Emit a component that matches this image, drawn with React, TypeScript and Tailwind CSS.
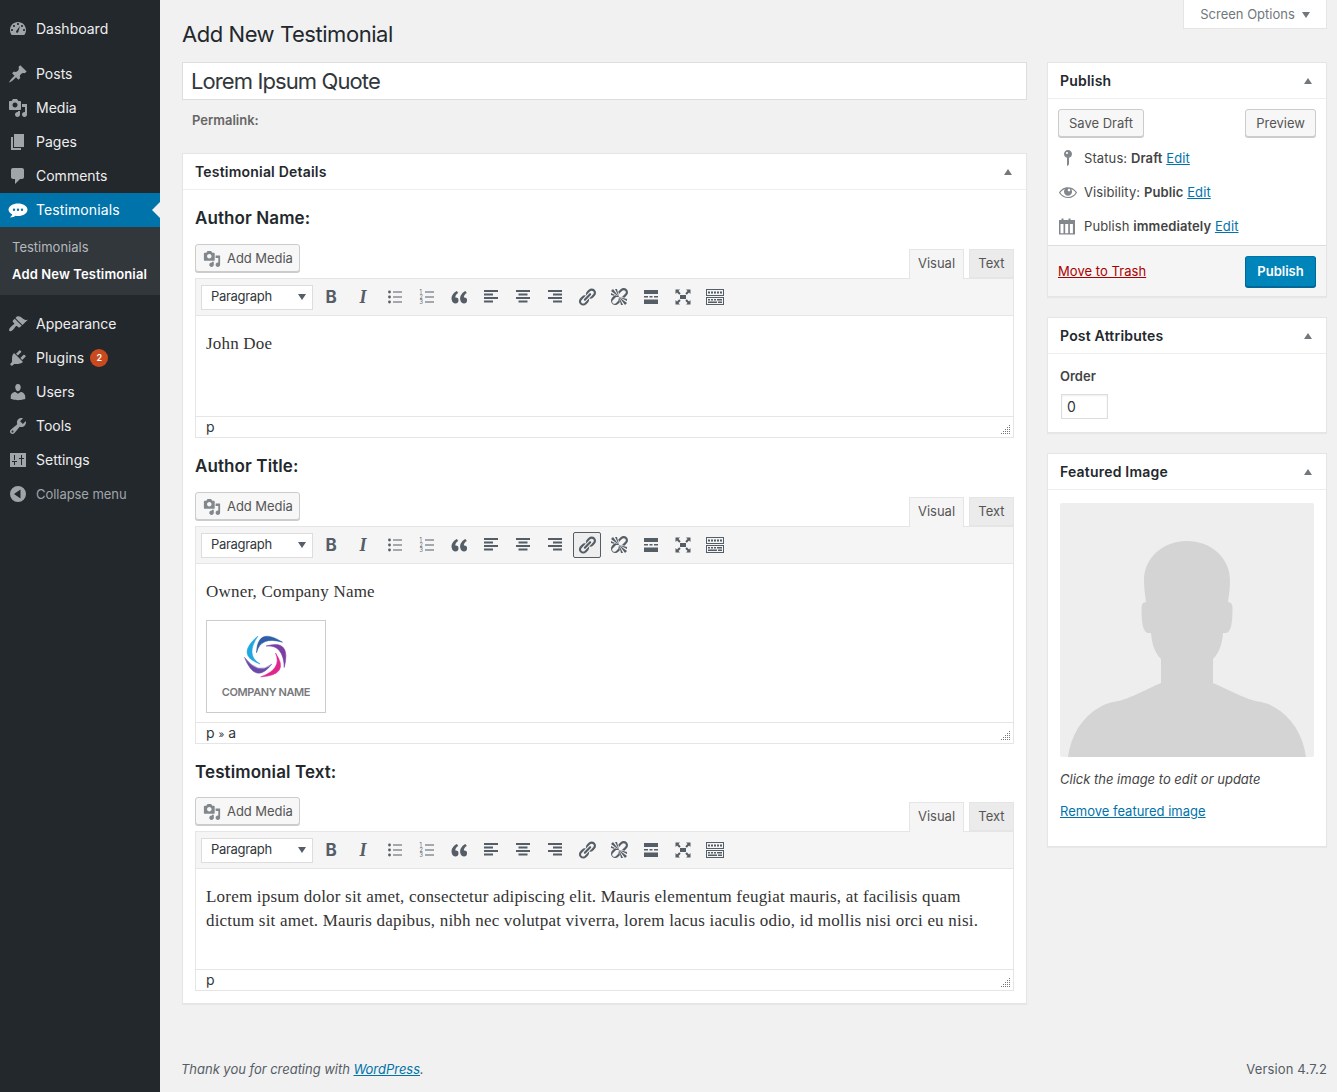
import type { ReactNode } from "react";

const PATHS = {
  dashboard:
    "M3.76 16h12.48c1.1-1.37 1.76-3.11 1.76-5 0-4.42-3.58-8-8-8s-8 3.58-8 8c0 1.89.66 3.63 1.76 5zM10 4c.55 0 1 .45 1 1s-.45 1-1 1-1-.45-1-1 .45-1 1-1zM6 6c.55 0 1 .45 1 1s-.45 1-1 1-1-.45-1-1 .45-1 1-1zm8 0c.55 0 1 .45 1 1s-.45 1-1 1-1-.45-1-1 .45-1 1-1zm-5.37 5.55L12 7l-1.55 5.55c-.1.9-.9 1.45-1.6 1.3-.9-.2-1.2-1.3-.22-2.3zM4 10c.55 0 1 .45 1 1s-.45 1-1 1-1-.45-1-1 .45-1 1-1zm12 0c.55 0 1 .45 1 1s-.45 1-1 1-1-.45-1-1 .45-1 1-1z",
  post: "M10.44 3.02l1.82-1.82 6.36 6.35-1.83 1.82c-1.05-.68-2.48-.57-3.41.36l-.75.75c-.92.93-1.04 2.35-.35 3.41l-1.83 1.82-2.41-2.41-2.8 2.79c-.42.42-3.38 2.71-3.8 2.29s1.86-3.39 2.28-3.81l2.79-2.79L4.1 9.36l1.83-1.82c1.05.69 2.48.57 3.4-.36l.75-.75c.93-.92 1.05-2.35.36-3.41z",
  media:
    "M13 11V4c0-.55-.45-1-1-1h-1.67L9 1H5L3.67 3H2c-.55 0-1 .45-1 1v7c0 .55.45 1 1 1h10c.55 0 1-.45 1-1zM7 4.5c1.38 0 2.5 1.12 2.5 2.5S8.38 9.5 7 9.5 4.5 8.38 4.5 7 5.62 4.5 7 4.5zM14 6h5v10.5c0 1.38-1.12 2.5-2.5 2.5S14 17.88 14 16.5s1.12-2.5 2.5-2.5c.17 0 .34.02.5.05V9h-3V6zm-4 8.05V13h2v3.5c0 1.38-1.12 2.5-2.5 2.5S7 17.88 7 16.5 8.12 14 9.5 14c.17 0 .34.02.5.05z",
  page: "M6 15V2h10v13H6zm-1 1h8v2H3V5h2v11z",
  comments:
    "M5 2h9c1.1 0 2 .9 2 2v7c0 1.1-.9 2-2 2h-2l-5 5v-5H5c-1.1 0-2-.9-2-2V4c0-1.1.9-2 2-2z",
  bubble:
    "M10 3.5c5 0 9.5 2.6 9.5 6.2 0 3.7-4.5 6.3-9.5 6.3-.9 0-1.7-.1-2.5-.2-1.2 1-3.2 1.7-5.6 1.7 1.1-.8 2-1.9 2.3-3.2C2 13.2.5 11.600.5 9.700.5 6.100 5 3.500 10 3.500zM6 8.500a1.200 1.200 0 100 2.400 1.200 1.200 0 000-2.400zm4 0a1.200 1.200 0 100 2.400 1.200 1.200 0 000-2.400zm4 0a1.200 1.200 0 100 2.400 1.200 1.200 0 000-2.400z",
  appearance:
    "M14.48 11.06L7.41 3.99l1.5-1.5c.5-.56 2.3-.47 3.51.32 1.21.8 1.43 1.28 2.91 2.1 1.18.64 2.45 1.26 4.45.85zm-.71.71L6.7 4.7 4.93 6.47c-.39.39-.39 1.02 0 1.41l1.06 1.06c.39.39.39 1.03 0 1.42-.6.6-1.43 1.11-2.21 1.69-.35.26-.7.53-1.01.84-1.43 1.43-2.3 3.07-1.43 3.93s2.5 0 3.93-1.43c.31-.31.58-.66.84-1.01.58-.78 1.09-1.61 1.69-2.21.39-.39 1.03-.39 1.42 0l1.06 1.06c.39.39 1.02.39 1.41 0z",
  plugins:
    "M13.11 4.36L9.87 7.6 8 5.73l3.24-3.24c.35-.34 1.05-.2 1.56.32.52.51.66 1.21.31 1.55zm-8 1.77l.91-1.12 9.01 9.01-1.19.84c-.71.71-2.63 1.16-3.82 1.16H6.14L4.9 17.26c-.59.59-1.54.59-2.12 0-.59-.58-.59-1.53 0-2.12l1.24-1.24v-3.88c0-1.13.4-3.19 1.09-3.89zm7.26 3.97l3.24-3.24c.34-.35 1.04-.21 1.55.31.52.51.66 1.21.31 1.55l-3.24 3.25z",
  users:
    "M10 9.25c-2.27 0-2.73-3.44-2.73-3.44C7 4.02 7.82 2 9.97 2c2.16 0 2.98 2.02 2.71 3.81 0 0-.41 3.44-2.68 3.44zm0 2.57L12.72 10c2.39 0 4.52 2.33 4.52 4.53v2.49s-3.65 1.13-7.24 1.13c-3.65 0-7.24-1.13-7.24-1.13v-2.49c0-2.25 1.94-4.48 4.47-4.48z",
  tools:
    "M16.68 9.77c-1.34 1.34-3.3 1.67-4.95.99l-5.41 6.52c-.99.99-2.59.99-3.58 0s-.99-2.59 0-3.57l6.52-5.42c-.68-1.65-.35-3.61.99-4.95 1.28-1.28 3.12-1.62 4.72-1.06l-2.89 2.89 2.82 2.82 2.86-2.87c.53 1.58.18 3.39-1.08 4.65zM3.81 16.21c.4.39 1.04.39 1.43 0 .4-.4.4-1.04 0-1.43-.39-.4-1.03-.4-1.43 0-.39.39-.39 1.03 0 1.43z",
  settings:
    "M2 3h16v14H2zM6 5v5h1V5zM4 11v1h2v3h1v-3h2v-1zM13 5v3h-2v1h2v6h1V9h2V8h-2V5z",
  collapse: "M10 2a8 8 0 100 16 8 8 0 000-16zM12.500 5.500v9L6 10z",
  pin: "M14 6c0 1.860-1.280 3.410-3 3.860V16c0 1-2 2-2 2V9.860c-1.720-.450-3-2-3-3.860 0-2.210 1.790-4 4-4s4 1.790 4 4zM8 5c0 .550.450 1 1 1s1-.450 1-1-.450-1-1-1-1 .450-1 1z",
  eye: "M18.300 9.500C15 4.900 8.500 3.800 3.900 7.200c-1.200.900-2.200 2.100-3 3.400.200.400.500.800.800 1.200 3.300 4.600 9.600 5.600 14.200 2.400.900-.700 1.700-1.400 2.400-2.400.300-.400.500-.800.800-1.200-.300-.400-.500-.800-.800-1.100zm-8.200-2.300c.500-.500 1.300-.500 1.800 0s.500 1.300 0 1.800-1.300.500-1.800 0-.500-1.300 0-1.800zm-.100 7.700c-3.100 0-6-1.600-7.700-4.200C3.500 9 5.100 7.800 7 7c-.700.800-1 1.700-1 2.700 0 2.200 1.700 4.100 4 4.100 2.200 0 4.100-1.700 4.100-4 0-1-.400-2-1-2.700 1.900.800 3.500 2 4.600 3.700-1.700 2.600-4.600 4.200-7.700 4.200z",
  calendar:
    "M1 4h2.500V2.500h2V4h5V2.500h2V4H17v14.500H1zM2.500 8v9.300h3V8zm4.700 0v9.300h3V8zm4.700 0v9.300h3V8z",
  quote:
    "M9.490 13.220c0-.740-.200-1.380-.610-1.900-.620-.780-1.830-.880-2.530-.720-.290-1.650 1.110-3.750 2.920-4.650L7.880 4c-2.570 1.110-5.840 4.400-5.260 8.500.370 2.560 2.040 4 3.900 4 1.660 0 2.970-1.170 2.970-3.280zm8.560 0c0-.740-.200-1.380-.610-1.900-.620-.780-1.830-.880-2.530-.720-.290-1.650 1.110-3.750 2.920-4.650L16.440 4c-2.570 1.110-5.840 4.400-5.260 8.500.370 2.560 2.040 4 3.900 4 1.660 0 2.970-1.170 2.970-3.280z",
  link: "M17.740 2.760c1.680 1.690 1.680 4.410 0 6.100l-1.530 1.520c-1.120 1.120-2.700 1.490-4.140 1.120l2.620-2.610.760-.770.760-.760c.840-.840.840-2.200 0-3.040-.840-.850-2.200-.850-3.040 0l-.770.760-3.380 3.380c-.370-1.440 0-3.020 1.120-4.140l1.520-1.530c1.690-1.680 4.420-1.680 6.100 0zM8.590 13.430l5.340-5.340c.420-.420.420-1.100 0-1.520-.440-.430-1.130-.390-1.530 0l-5.330 5.340c-.420.420-.420 1.100 0 1.520.440.430 1.130.390 1.520 0zm-.760 2.290l4.140-4.150c.380 1.440 0 3.020-1.140 4.160l-1.520 1.520c-1.680 1.680-4.410 1.680-6.100 0-1.680-1.680-1.680-4.420 0-6.100l1.530-1.520c1.120-1.120 2.700-1.500 4.140-1.140L4.690 12.900c-.840.840-.840 2.200 0 3.040.840.850 2.200.850 3.040 0z",
  unlink:
    "M17.740 2.260c1.680 1.690 1.680 4.410 0 6.100l-1.530 1.520c-.320.330-.690.580-1.080.770L13 10l1.690-1.640.760-.770.760-.760c.840-.840.840-2.200 0-3.040-.840-.850-2.200-.850-3.040 0l-.770.760-.760.760L10 7l-.650-2.140c.190-.380.440-.750.770-1.070l1.520-1.530c1.690-1.680 4.420-1.680 6.100 0zM2 4l8 6-6-8zm4-2l4 8-2-8H6zM2 6l8 4-8-2V6zm7.360 7.690L10 10l.860 5.140-1.520 1.530c-1.680 1.680-4.410 1.680-6.100 0-1.680-1.680-1.680-4.420 0-6.100l1.530-1.520c.320-.330.690-.580 1.080-.770L7 10l-1.690 1.640-.760.770-.760.760c-.840.840-.840 2.200 0 3.040.840.850 2.200.850 3.040 0l.770-.760.760-.760zM18 16l-8-6 6 8zm-4 2l-4-8 2 8h2zm4-4l-8-4 8 2v2z",
  more: "M3 3h14v4H3zM3 9h4v1.500H3zM8.500 9h3v1.500h-3zM13 9h4v1.500h-4zM3 12.500h14V17H3z",
  fullscreen:
    "M7 8h6v4H7zM2.500 2.500H7L5.500 4l2.200 2.200-1.500 1.500L4 5.500 2.500 7zM17.500 2.500V7L16 5.500l-2.200 2.200-1.500-1.500L14.500 4 13 2.500zM2.500 17.500V13L4 14.500l2.200-2.200 1.500 1.500L5.500 16 7 17.500zM17.500 17.500H13l1.500-1.500-2.200-2.200 1.500-1.500 2.200 2.200L17.500 13z",
  kitchen:
    "M1 2h18v7H1zM2 3v5h16V3zM3 4.500h2v2H3zM6 4.500h2v2H6zM9 4.500h2v2H9zM12 4.500h2v2h-2zM15 4.500h2v2h-2zM1 10h18v8H1zM2 11v6h16v-6zM3 12h2v1.500H3zM6 12h2v1.500H6zM9 12h2v1.500H9zM12 12h5v1.500h-5zM3 14.500h9V16H3zM13 14.500h4V16h-4z",
};

function Dash({ d, className }: { d: string; className?: string }) {
  return (
    <svg viewBox="0 0 20 20" className={className} fill="currentColor">
      <path d={d} fillRule="evenodd" clipRule="evenodd" />
    </svg>
  );
}

function MenuItem({ icon, label, children }: { icon: string; label: string; children?: ReactNode }) {
  return (
    <div className="flex h-[34px] items-center text-[14px] text-[#eeeeee]">
      <Dash d={icon} className="ml-[8px] h-[20px] w-[20px] text-[#a0a5aa]" />
      <span className="ml-[8px] pb-[2px]">{label}</span>
      {children}
    </div>
  );
}

function Sidebar() {
  return (
    <aside className="w-[160px] shrink-0 bg-[#23282d] pt-[12px]">
      <MenuItem icon={PATHS.dashboard} label="Dashboard" />
      <div className="h-[11px]" />
      <MenuItem icon={PATHS.post} label="Posts" />
      <MenuItem icon={PATHS.media} label="Media" />
      <MenuItem icon={PATHS.page} label="Pages" />
      <MenuItem icon={PATHS.comments} label="Comments" />
      <div className="relative flex h-[34px] items-center bg-[#0073aa] text-[14px] text-white">
        <Dash d={PATHS.bubble} className="ml-[8px] h-[20px] w-[20px]" />
        <span className="ml-[8px] pb-[2px] tracking-[0.1px]">Testimonials</span>
        <span className="absolute right-0 top-[9px] h-0 w-0 border-y-[8px] border-r-[8px] border-y-transparent border-r-[#f1f1f1]" />
      </div>
      <div className="h-[68px] bg-[#32373c] pt-[8px] text-[13px]">
        <div className="flex h-[26px] items-center pl-[12px] text-[#b4b9be]">Testimonials</div>
        <div className="flex h-[28px] items-center pl-[12px] font-semibold tracking-[0.13px] text-white">Add New Testimonial</div>
      </div>
      <div className="h-[12px]" />
      <MenuItem icon={PATHS.appearance} label="Appearance" />
      <MenuItem icon={PATHS.plugins} label="Plugins">
        <span className="ml-[6px] flex h-[18px] w-[18px] items-center justify-center rounded-full bg-[#ca4a1f] text-[9px] font-semibold text-white">
          2
        </span>
      </MenuItem>
      <MenuItem icon={PATHS.users} label="Users" />
      <MenuItem icon={PATHS.tools} label="Tools" />
      <MenuItem icon={PATHS.settings} label="Settings" />
      <div className="flex h-[34px] items-center text-[13px] text-[#a0a5aa]">
        <Dash d={PATHS.collapse} className="ml-[8px] h-[20px] w-[20px]" />
        <span className="ml-[8px] pt-[2px] tracking-[-0.05px]">Collapse menu</span>
      </div>
    </aside>
  );
}

function Caret() {
  return <span className="h-0 w-0 border-x-[4px] border-b-[6px] border-x-transparent border-b-[#72777c]" />;
}

function Box({ title, children }: { title: string; children: ReactNode }) {
  return (
    <section className="border border-[#e5e5e5] bg-white shadow-[0_1px_1px_rgba(0,0,0,0.04)]">
      <header className="flex h-[36px] items-center justify-between border-b border-[#eeeeee] pl-[12px] pr-[14px] text-[14px] font-semibold tracking-[0.2px] text-[#23282d]">
        <span>{title}</span>
        <Caret />
      </header>
      {children}
    </section>
  );
}

function WpButton({ children, className = "" }: { children: ReactNode; className?: string }) {
  return (
    <button className={`flex h-[28px] items-center rounded-[3px] border border-[#cccccc] bg-[#f7f7f7] px-[10px] pt-[1px] text-[13px] text-[#555555] shadow-[0_1px_0_#cccccc] ${className}`}>
      {children}
    </button>
  );
}

function Bars({ rows }: { rows: [number, number][] }) {
  return (
    <svg viewBox="0 0 20 20" className="h-[20px] w-[20px]" fill="currentColor">
      {rows.map(([x, w], i) => (
        <rect key={i} x={x} y={3 + i * 3.5} width={w} height={2} />
      ))}
    </svg>
  );
}

function BulletList() {
  return (
    <svg viewBox="0 0 20 20" className="h-[20px] w-[20px]" fill="currentColor">
      {[5, 10, 15].map((y) => (
        <g key={y}>
          <circle cx={4.5} cy={y} r={1.4} />
          <rect x={8} y={y - 0.5} width={9} height={1} />
        </g>
      ))}
    </svg>
  );
}

function NumberList() {
  return (
    <svg viewBox="0 0 20 20" className="h-[20px] w-[20px]" fill="currentColor">
      {[1, 2, 3].map((n) => (
        <g key={n}>
          <text x={2.500} y={2 + n * 5} fontSize={5.500} fontFamily="Inter, sans-serif">
            {n}
          </text>
          <rect x={8} y={n * 5 - 0.5} width={9} height={1} />
        </g>
      ))}
    </svg>
  );
}

function Tool({ children, active }: { children: ReactNode; active?: boolean }) {
  return (
    <div
      className={`flex h-[26px] w-[28px] items-center justify-center rounded-[2px] border text-[#555d66] ${
        active ? "border-[#555d66] bg-[#eeeeee]" : "border-transparent"
      }`}
    >
      {children}
    </div>
  );
}

function Toolbar({ activeLink }: { activeLink?: boolean }) {
  return (
    <div className="flex h-[37px] items-center border-b border-[#e5e5e5] bg-[#f5f5f5] pl-[5px]">
      <div className="flex h-[25px] w-[112px] items-center justify-between border border-[#dddddd] bg-white pl-[9px] pr-[6px] text-[13px] text-[#32373c]">
        <span className="tracking-[-0.3px]">Paragraph</span>
        <span className="h-0 w-0 border-x-[4px] border-t-[6px] border-x-transparent border-t-[#555d66]" />
      </div>
      <div className="ml-[4px] flex gap-[4px]">
        <Tool>
          <span className="pt-[2px] text-[17px] font-bold text-[#555d66]">B</span>
        </Tool>
        <Tool>
          <span className="pt-[1px] text-[18px] font-bold italic text-[#555d66] [font-family:'Liberation_Serif',serif]">I</span>
        </Tool>
        <Tool><BulletList /></Tool>
        <Tool><NumberList /></Tool>
        <Tool><Dash d={PATHS.quote} className="h-[20px] w-[20px]" /></Tool>
        <Tool><Bars rows={[[3, 14], [3, 9], [3, 14], [3, 9]]} /></Tool>
        <Tool><Bars rows={[[3, 14], [5.500, 9], [3, 14], [5.500, 9]]} /></Tool>
        <Tool><Bars rows={[[3, 14], [8, 9], [3, 14], [8, 9]]} /></Tool>
        <Tool active={activeLink}><Dash d={PATHS.link} className="h-[20px] w-[20px]" /></Tool>
        <Tool><Dash d={PATHS.unlink} className="h-[20px] w-[20px]" /></Tool>
        <Tool><Dash d={PATHS.more} className="h-[20px] w-[20px]" /></Tool>
        <Tool><Dash d={PATHS.fullscreen} className="h-[20px] w-[20px]" /></Tool>
        <Tool><Dash d={PATHS.kitchen} className="h-[20px] w-[20px]" /></Tool>
      </div>
    </div>
  );
}

function ResizeGrip() {
  return (
    <svg viewBox="0 0 10 10" className="h-[10px] w-[10px] text-[#72777c]" fill="currentColor">
      {[
        [8, 0], [6, 2], [8, 2], [4, 4], [6, 4], [8, 4], [2, 6], [4, 6], [6, 6], [8, 6], [0, 8], [2, 8], [4, 8], [6, 8], [8, 8],
      ].map(([x, y]) => (
        <rect key={`${x}-${y}`} x={x} y={y} width={1} height={1} />
      ))}
    </svg>
  );
}

function Editor({
  title,
  headerClass,
  contentClass,
  path,
  activeLink,
  children,
}: {
  title: string;
  headerClass: string;
  contentClass: string;
  path: ReactNode;
  activeLink?: boolean;
  children: ReactNode;
}) {
  return (
    <div>
      <h3 className={`pt-[16px] text-[17px] font-semibold leading-[24px] tracking-[0.1px] text-[#23282d] ${headerClass}`}>{title}</h3>
      <div className="relative z-10 flex h-[34px] items-start justify-between">
        <WpButton className="w-[105px] pl-[7px] pr-0">
          <Dash d={PATHS.media} className="h-[18px] w-[18px] text-[#82878c]" />
          <span className="ml-[6px] whitespace-nowrap tracking-[-0.05px]">Add Media</span>
        </WpButton>
        <div className="mt-[5px] flex text-[13px]">
          <div className="flex h-[30px] w-[55px] items-center justify-center border border-b-0 border-[#e5e5e5] bg-[#f5f5f5] pb-[2px] text-[#555555]">
            Visual
          </div>
          <div className="ml-[5px] flex h-[29px] w-[45px] items-center justify-center border border-[#e5e5e5] bg-[#ebebeb] text-[#555555]">
            Text
          </div>
        </div>
      </div>
      <div className="border border-[#e5e5e5] bg-white">
        <Toolbar activeLink={activeLink} />
        <div className={`pl-[10px] pr-[20px] pt-[16px] text-[17px] leading-[24px] tracking-[0.2px] text-[#333333] [font-family:'Liberation_Serif',serif] ${contentClass}`}>
          {children}
        </div>
        <div className="relative flex h-[21px] items-center border-t border-[#e5e5e5] pb-[2px] pl-[10px] text-[14px] text-[#32373c]">
          {path}
          <span className="absolute bottom-[2px] right-[2px] flex">
            <ResizeGrip />
          </span>
        </div>
      </div>
    </div>
  );
}

function CompanyLogo() {
  const colors = ["#1ea7e1", "#2f5fa8", "#7b3fa3", "#e0268e", "#6a4aa8"];
  return (
    <div className="mt-[16px] flex h-[93px] w-[120px] flex-col items-center border border-[#cccccc] pt-[12px]">
      <svg viewBox="0 0 46 46" className="h-[46px] w-[46px] overflow-visible">
        {colors.map((color, i) => (
          <path
            key={color}
            d="M15 3Q-8 22 17 31Q2 22 15 3z"
            fill={color}
            stroke={color}
            strokeWidth={0.5}
            strokeLinejoin="round"
            transform={`rotate(${i * 72} 23 23)`}
          />
        ))}
      </svg>
      <span className="mt-[6px] text-[11px] font-semibold leading-[14px] tracking-[-0.4px] text-[#77787b] [font-family:Inter,sans-serif]">
        COMPANY NAME
      </span>
    </div>
  );
}

function PublishBox() {
  const link = "text-[#0073aa] underline";
  return (
    <Box title="Publish">
      <div className="flex justify-between px-[10px] pt-[10px]">
        <WpButton>Save Draft</WpButton>
        <WpButton>Preview</WpButton>
      </div>
      <div className="px-[10px] pb-[2px] pt-[4px] text-[13px] tracking-[0.1px] text-[#444444]">
        <div className="flex h-[34px] items-center">
          <Dash d={PATHS.pin} className="h-[20px] w-[20px] text-[#82878c]" />
          <span className="ml-[6px] pt-[1px]">
            Status: <b className="font-semibold">Draft</b> <span className={link}>Edit</span>
          </span>
        </div>
        <div className="flex h-[34px] items-center">
          <Dash d={PATHS.eye} className="h-[20px] w-[20px] text-[#82878c]" />
          <span className="ml-[6px] pt-[1px]">
            Visibility: <b className="font-semibold">Public</b> <span className={link}>Edit</span>
          </span>
        </div>
        <div className="flex h-[34px] items-center">
          <Dash d={PATHS.calendar} className="h-[20px] w-[20px] text-[#82878c]" />
          <span className="ml-[6px] pt-[1px]">
            Publish <b className="font-semibold">immediately</b> <span className={link}>Edit</span>
          </span>
        </div>
      </div>
      <div className="flex h-[51px] items-center justify-between border-t border-[#dddddd] bg-[#f5f5f5] px-[10px] text-[13px]">
        <span className="pt-[1px] tracking-[0.05px] text-[#a00] underline">Move to Trash</span>
        <button className="flex h-[31px] w-[71px] items-center justify-center rounded-[3px] border border-[#006799] border-t-[#0073aa] bg-[#0085ba] pt-[1px] font-semibold text-white shadow-[0_1px_0_#006799]">
          Publish
        </button>
      </div>
    </Box>
  );
}

function AttributesBox() {
  return (
    <Box title="Post Attributes">
      <div className="h-[78px] px-[12px] pt-[12px] text-[13px]">
        <div className="font-semibold leading-[20px] text-[#444444]">Order</div>
        <div className="ml-[1px] mt-[8px] flex h-[25px] w-[47px] items-center border border-[#dddddd] pl-[5px] text-[14px] text-[#32373c] shadow-[inset_0_1px_2px_rgba(0,0,0,0.07)]">
          0
        </div>
      </div>
    </Box>
  );
}

function FeaturedBox() {
  return (
    <Box title="Featured Image">
      <div className="h-[356px] px-[12px] pt-[13px] text-[13px]">
        <svg viewBox="0 0 254 254" className="h-[254px] w-[254px] rounded-[2px] bg-[#eeeeee]">
          <path
            fill="#d4d4d4"
            d="M127 38C103 38 84 55 84 77C84 85 85 92 86 99C83 99 81.500 101 81.500 105C81.500 115 82 124 85 128C86 130 88 130 91 130C92 142 95 150 101 156L101 180C85 187 72 194 62 197C57 199 50 198 40 204C22 214 11 232 8 254L246 254C243 232 232 214 214 204C204 198 197 199 192 197C182 194 169 187 153 180L153 156C159 150 162 142 163 130C166 130 168 130 169 128C172 124 172.500 115 172.500 105C172.500 101 171 99 168 99C169 92 170 85 170 77C170 55 151 38 127 38z"
          />
        </svg>
        <p className="mt-[12px] italic leading-[20px] text-[#444444]">Click the image to edit or update</p>
        <p className="mt-[12px] leading-[20px] text-[#0073aa] underline">Remove featured image</p>
      </div>
    </Box>
  );
}

export default function App() {
  return (
    <div className="flex min-h-[1092px] bg-[#f1f1f1] [font-family:Inter,sans-serif]">
      <Sidebar />
      <main className="flex min-w-0 flex-1 flex-col pl-[22px] pr-[10px]">
        <div className="flex h-[62px] items-start justify-between">
          <h1 className="pt-[19px] text-[22px] leading-[30px] tracking-[-0.45px] text-[#23282d]">Add New Testimonial</h1>
          <div className="flex h-[29px] w-[144px] items-center justify-center gap-[7px] border border-t-0 border-[#e5e5e5] bg-white pt-[2px] text-[13px] text-[#72777c]">
            <span>Screen Options</span>
            <span className="h-0 w-0 border-x-[4px] border-t-[6px] border-x-transparent border-t-[#72777c]" />
          </div>
        </div>
        <div className="flex flex-1 items-start gap-[20px]">
          <div className="w-[845px]">
            <div className="flex h-[38px] items-center border border-[#dddddd] bg-white pl-[8px] text-[22px] tracking-[-0.9px] text-[#32373c]">
              Lorem Ipsum Quote
            </div>
            <div className="flex h-[53px] items-start pl-[10px] pt-[10px] text-[13px] font-semibold leading-[20px] text-[#666666]">
              Permalink:
            </div>
            <Box title="Testimonial Details">
              <div className="px-[12px] pb-[12px]">
                <Editor
                  title="Author Name:"
                  headerClass="h-[54px]"
                  contentClass="h-[100px]"
                  path={<span>p</span>}
                >
                  John Doe
                </Editor>
                <Editor
                  title="Author Title:"
                  headerClass="h-[54px]"
                  contentClass="h-[158px]"
                  activeLink
                  path={
                    <span>
                      p <span className="text-[10px]">»</span> a
                    </span>
                  }
                >
                  Owner, Company Name
                  <CompanyLogo />
                </Editor>
                <Editor
                  title="Testimonial Text:"
                  headerClass="h-[53px]"
                  contentClass="h-[100px]"
                  path={<span>p</span>}
                >
                  Lorem ipsum dolor sit amet, consectetur adipiscing elit. Mauris elementum feugiat mauris, at facilisis quam dictum sit amet. Mauris dapibus, nibh nec volutpat viverra, lorem lacus iaculis odio, id mollis nisi orci eu nisi.
                </Editor>
              </div>
            </Box>
          </div>
          <div className="flex w-[280px] flex-col gap-[20px]">
            <PublishBox />
            <AttributesBox />
            <FeaturedBox />
          </div>
        </div>
        <footer className="flex h-[33px] items-start justify-between text-[13px] leading-[20px] tracking-[-0.03px] text-[#555d66]">
          <span className="-ml-[1px] italic">
            Thank you for creating with <span className="text-[#0073aa] underline">WordPress</span>.
          </span>
          <span className="tracking-[0.15px]">Version 4.7.2</span>
        </footer>
      </main>
    </div>
  );
}
